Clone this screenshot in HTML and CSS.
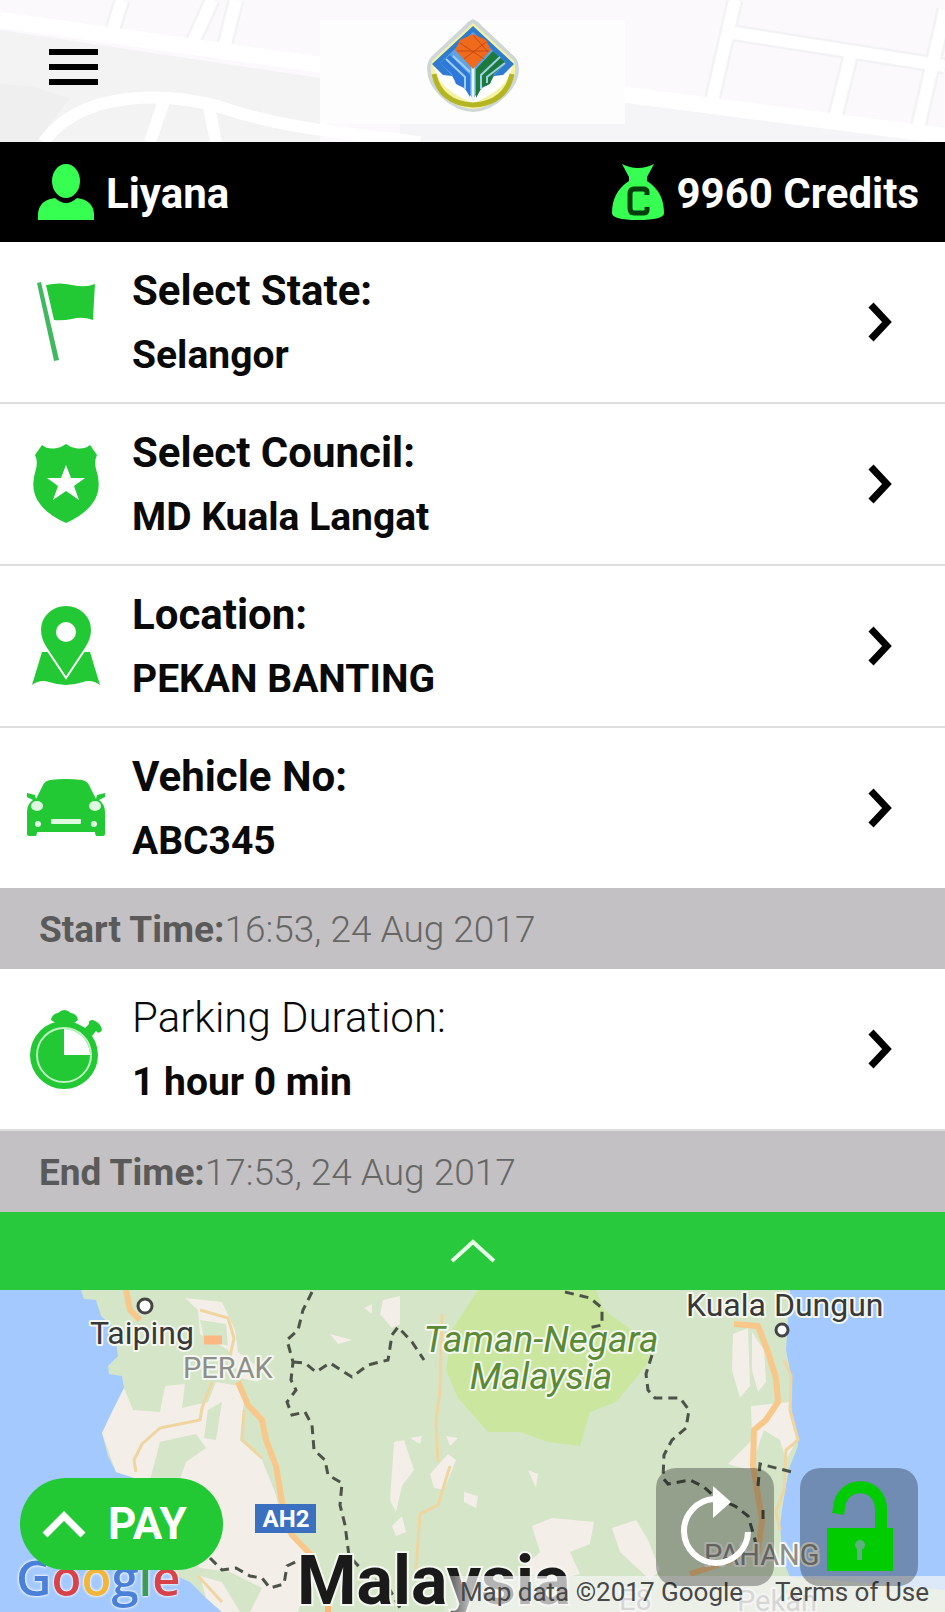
FILE: index.html
```html
<!DOCTYPE html>
<html lang="en">
<head>
  <meta charset="UTF-8">
  <meta name="viewport" content="width=device-width, initial-scale=1">
  <title>Parking</title>
  <link rel="stylesheet" href="styles.css">
</head>
<body>

  <header class="topbar">
    <svg class="topbar-bg" viewBox="0 0 945 142" preserveAspectRatio="xMidYMid slice" aria-hidden="true">
      <rect width="945" height="142" fill="#fbf9fc"/>
      <path d="M0 30 L320 78 V142 H0 Z" fill="#f3f3f4"/>
      <path d="M0 84 L30 86 L70 98 L36 142 H0 Z" fill="#efeff0"/>
      <path d="M620 100 L945 142 H400 V120 Z" fill="#f5f5f7"/>
      <g fill="none" stroke="#f3f2f5" stroke-width="17">
        <path d="M122 0 L112 32 M212 0 L193 42 M236 0 L224 48"/>
        <path d="M735 0 L710 110 M728 32 L945 66 M852 50 L835 118 M945 10 L918 128"/>
      </g>
      <g fill="none" stroke="#fff" stroke-width="12">
        <path d="M0 20 L330 66" stroke-width="16"/>
        <path d="M122 0 L112 32 M212 0 L193 42 M236 0 L224 48"/>
        <path d="M44 142 C80 90 170 90 230 110 S360 134 420 142"/>
        <path d="M165 98 L150 142 M208 102 L216 142"/>
        <path d="M735 0 L710 110 M728 32 L945 66 M852 50 L835 118 M945 10 L918 128"/>
        <path d="M620 94 L945 136" stroke-width="16"/>
      </g>
      <rect x="320" y="20" width="305" height="104" fill="#fefdfe"/>
    </svg>

    <button class="menu-btn" type="button" aria-label="Menu">
      <span></span>
      <span></span>
      <span></span>
    </button>

    <svg class="logo" viewBox="0 0 94 94" role="img" aria-label="Council logo">
      <path d="M47 0 Q52 2 56 7 L88 37 Q93 42 93 50 Q93 64 80 77 Q65 92 47 93 Q29 92 14 77 Q1 64 1 50 Q1 42 6 37 L38 7 Q42 2 47 0 Z" fill="#cfd6d8"/>
      <path d="M47 4 L88 42 Q93 60 77 75 Q64 89 47 90 Q30 89 17 75 Q1 60 6 42 Z" fill="#f4f3a4"/>
      <path d="M8 48 L86 48 Q82 70 47 84 Q12 70 8 48 Z" fill="#fff"/>
      <path d="M8 55 Q14 84 47 86 Q80 84 86 55" fill="none" stroke="#b3b522" stroke-width="5"/>
      <path d="M47 7 L88 45 L77 56 L68 57 L62 66 L54 70 L47 80 L40 70 L32 66 L26 57 L17 56 L6 45 Z" fill="#2e7bd0"/>
      <path d="M47 13 L80 44 L47 78 L14 44 Z" fill="#5fa3e6"/>
      <path d="M14 44 L24 36 L44 56 V78 L38 68 L30 65 L26 55 Z" fill="#2f78db"/>
      <path d="M80 44 L67 32 L50 50 V79 L56 68 L64 65 L68 55 Z" fill="#1c7a3d"/>
      <path d="M20 40 L39 58 V70 M27 37 L44 53 M55 70 V56 L74 38 M61 64 V58 L79 44" fill="none" stroke="#9fd0e8" stroke-width="2"/>
      <path d="M47 46 V82" stroke="#e8f4ee" stroke-width="3"/>
      <path d="M47 15 L60 21 L65 31 L47 50 L29 31 L34 21 Z" fill="#ef6a1c"/>
      <path d="M34 24 L58 40 M47 16 L62 33 M60 23 L38 40 M31 32 H63" stroke="#c94a12" stroke-width="1"/>
    </svg>
  </header>

  <section class="account">
    <div class="account-item">
      <svg class="user-icon" viewBox="0 0 56 56" aria-hidden="true">
        <ellipse cx="28" cy="17" rx="14" ry="17"/>
        <path d="M0 56 V50 Q1 36 17 34 Q28 44 39 34 Q55 36 56 50 V56 Z"/>
      </svg>
      <span>Liyana</span>
    </div>
    <div class="account-item credits">
      <svg class="bag-icon" viewBox="0 0 52 56" aria-hidden="true">
        <path d="M10 0 Q18 4 26 4 Q34 4 42 0 L35 13 V17 Q52 28 52 49 Q52 56 26 56 Q0 56 0 49 Q0 28 17 17 V13 Z"/>
        <path class="bag-mark" d="M35 31 V28 Q35 25 31 25 H22 Q18 25 18 30 V44 Q18 49 22 49 H31 Q35 49 35 46 V43"/>
      </svg>
      <span>9960 Credits</span>
    </div>
  </section>

  <main>
    <button class="row" type="button">
      <svg class="row-icon" viewBox="0 0 80 80" aria-hidden="true">
        <path d="M11 1 L15 0 L33 78 L28 79 Z" fill="#3fb860"/>
        <path d="M20 3 Q34 0 46 3 Q60 6 69 2 L68 18 L67 38 Q56 34 46 37 Q36 39 28 38 Z"/>
      </svg>
      <span class="row-text">
        <span class="row-label">Select State:</span>
        <span class="row-value">Selangor</span>
      </span>
      <svg class="chevron" viewBox="0 0 24 40" aria-hidden="true"><path d="M3 3 L19 20 L3 37"/></svg>
    </button>

    <button class="row" type="button">
      <svg class="row-icon" viewBox="0 0 80 80" aria-hidden="true">
        <path d="M16 1 Q22 6 31 4 Q36 3 40 0 Q44 3 49 4 Q58 6 64 1 L71 11 Q68 17 70 25 Q77 46 66 60 Q58 71 40 79 Q22 71 14 60 Q3 46 10 25 Q12 17 9 11 Z"/>
        <path fill="#fff" d="M40 21 L45 34 H59 L48 42 L53 56 L40 47 L27 56 L32 42 L21 34 H35 Z"/>
      </svg>
      <span class="row-text">
        <span class="row-label">Select Council:</span>
        <span class="row-value">MD Kuala Langat</span>
      </span>
      <svg class="chevron" viewBox="0 0 24 40" aria-hidden="true"><path d="M3 3 L19 20 L3 37"/></svg>
    </button>

    <button class="row" type="button">
      <svg class="row-icon" viewBox="0 0 80 80" aria-hidden="true">
        <path d="M16 46 H64 L74 79 Q66 73 57 76 Q48 79 40 79 Q32 79 23 76 Q14 73 6 79 Z"/>
        <path stroke="#fff" stroke-width="2" d="M40 72 L20 42 Q14 33 14 24 A26 25 0 0 1 66 24 Q66 33 60 42 Z"/>
        <circle cx="40" cy="26" r="10" fill="#fff"/>
      </svg>
      <span class="row-text">
        <span class="row-label">Location:</span>
        <span class="row-value">PEKAN BANTING</span>
      </span>
      <svg class="chevron" viewBox="0 0 24 40" aria-hidden="true"><path d="M3 3 L19 20 L3 37"/></svg>
    </button>

    <button class="row" type="button">
      <svg class="row-icon" viewBox="0 0 80 80" aria-hidden="true">
        <path d="M24 12 Q40 10 56 12 Q61 13 63 17 L70 31 L71 27 L79 25 V29 L73 32 Q79 36 79 44 V66 Q79 68 76 68 H71 Q69 68 69 64 H11 Q11 68 9 68 H4 Q1 68 1 66 V44 Q1 36 7 32 L1 29 V25 L9 27 L10 31 L17 17 Q19 13 24 12 Z"/>
        <g fill="#dff8e0">
          <ellipse cx="11" cy="38" rx="6" ry="5"/>
          <ellipse cx="69" cy="38" rx="6" ry="5"/>
          <circle cx="12" cy="56" r="3"/>
          <circle cx="68" cy="56" r="3"/>
          <rect x="25" y="51" width="30" height="5" rx="1"/>
        </g>
      </svg>
      <span class="row-text">
        <span class="row-label">Vehicle No:</span>
        <span class="row-value">ABC345</span>
      </span>
      <svg class="chevron" viewBox="0 0 24 40" aria-hidden="true"><path d="M3 3 L19 20 L3 37"/></svg>
    </button>

    <p class="time-bar"><b>Start Time:</b>16:53, 24 Aug 2017</p>

    <button class="row" type="button">
      <svg class="row-icon" viewBox="0 0 80 80" aria-hidden="true">
        <path d="M25 11 Q26 5 32 4 Q38 -2 45 4 Q51 5 52 11 L47 15 V20 H31 V15 Z"/>
        <path d="M58 20 L63 15 Q62 11 67 11 Q75 14 76 21 Q73 26 70 22 L66 27 Z"/>
        <circle cx="38" cy="46" r="34"/>
        <circle cx="38" cy="46" r="27" fill="none" stroke="#bff3c2" stroke-width="2"/>
        <path fill="#fff" d="M38 46 V20 A26 26 0 0 1 64 46 Z"/>
      </svg>
      <span class="row-text">
        <span class="row-label light">Parking Duration:</span>
        <span class="row-value">1 hour 0 min</span>
      </span>
      <svg class="chevron" viewBox="0 0 24 40" aria-hidden="true"><path d="M3 3 L19 20 L3 37"/></svg>
    </button>

    <p class="time-bar"><b>End Time:</b>17:53, 24 Aug 2017</p>

    <button class="collapse" type="button" aria-label="Collapse">
      <svg viewBox="0 0 46 24" aria-hidden="true"><path d="M2 22 L23 3 L44 22"/></svg>
    </button>
  </main>

  <section class="map">
    <svg class="map-bg" viewBox="0 0 945 322" preserveAspectRatio="xMidYMid slice">
      <rect width="945" height="322" fill="#a3c9ff"/>
      <!-- land -->
      <path fill="#d5e5c8" d="M81 0 L84 9 L96 10 L101 26 L114 38 L118 66 L108 76 L109 84 L122 86 L124 98 L112 122 L102 143 L108 166 L116 182 L134 187 L150 250 L172 284 L190 292 L206 308 L222 322 H945 V300 L790 287 L783 270 L780 235 L782 220 L786 195 L790 176 L798 156 L797 145 L791 130 L792 90 L786 60 L790 0 Z"/>
      <!-- lowlands -->
      <g fill="#f3eee8">
        <path d="M185 8 L222 12 L235 40 L238 62 L262 80 L258 92 L240 88 L228 60 L200 44 L198 20 Z"/>
        <path d="M124 98 L133 120 L160 122 L165 96 L185 94 L182 118 L208 112 L216 92 L240 96 L244 110 L240 150 L262 170 L276 205 L284 240 L312 270 L298 322 L250 322 L262 298 L230 282 L200 278 L160 240 L140 190 L116 182 L102 143 L112 122 Z"/>
        <path d="M383 10 L400 6 L400 34 L392 38 L380 24 Z"/>
        <path d="M394 152 L404 150 L414 180 L402 196 L396 222 L390 210 Z"/>
        <path d="M430 184 L448 164 L456 170 L444 200 L434 198 Z"/>
        <path d="M733 44 L748 38 L750 96 L740 108 L732 80 Z"/>
        <path d="M752 42 L764 60 L766 92 L758 102 L752 80 Z"/>
        <path d="M751 116 L790 112 L797 150 L786 170 L780 150 L764 140 L750 180 L728 174 L752 150 Z"/>
        <path d="M532 236 L552 228 L594 232 L590 254 L570 262 L580 284 L548 292 L520 280 L540 262 Z"/>
        <path d="M612 238 L636 230 L648 250 L660 280 L650 290 L620 262 Z"/>
        <path d="M464 202 L478 206 L476 218 L464 212 Z M528 180 L538 184 L536 198 Z"/>
        <path d="M392 236 L402 226 L406 242 L396 246 Z M446 146 L458 148 L450 156 Z"/>
        <path d="M364 18 L372 14 L372 24 Z M330 44 L352 50 L338 54 Z M410 148 L422 146 L420 154 Z"/>
        <path d="M200 286 L222 292 L240 322 H222 L206 308 Z"/>
      </g>
      <g fill="#d5e5c8">
        <path d="M160 152 L196 144 L206 158 L186 172 L176 200 L150 190 Z"/>
        <path d="M208 120 L222 112 L216 150 L204 148 Z M246 132 L258 130 L256 164 L248 156 Z"/>
        <path d="M200 30 L226 34 L228 56 L204 48 Z"/>
      </g>
      <!-- national park -->
      <path fill="#cbe79f" d="M478 0 L596 0 L604 20 L640 46 L650 70 L636 88 L616 112 L590 122 L580 156 L548 152 L520 142 L488 142 L474 126 L458 108 L446 80 L452 40 Z"/>
      <!-- roads -->
      <g fill="none" stroke="#f7c88a" stroke-width="6" stroke-linejoin="round">
        <path d="M126 0 L130 20 L140 30"/>
        <path d="M204 50 H222" stroke-width="9" stroke="#fbb884"/>
        <path d="M238 92 L248 115 L262 130 L266 150 L276 176 L282 212 L292 245 L312 266"/>
        <path d="M734 34 L758 36 L768 62 L776 88 L778 112 L766 130 L754 140 L753 175 L762 230 L758 262 L690 284"/>
      </g>
      <g fill="none" stroke="#efd6a0" stroke-width="3" stroke-linejoin="round">
        <path d="M200 20 L228 28 L234 48 L230 66"/>
        <path d="M212 92 L202 118 L200 130 L160 138 L142 154 L134 170 L136 182"/>
        <path d="M244 120 L242 150 L262 168"/>
        <path d="M442 24 L440 100 L436 130 L438 172 M450 176 L438 215 L420 224 L416 280"/>
        <path d="M784 70 L791 86 L790 120 L798 150 L786 160 L784 200 L776 222 L780 240"/>
        <path d="M198 286 L222 312"/>
        <path d="M328 300 V322" stroke="#f9b878" stroke-width="6"/>
      </g>
      <!-- state borders -->
      <g fill="none" stroke="#4c5348" stroke-width="3" stroke-dasharray="9 6">
        <path d="M312 2 L303 20 L298 40 L287 50 L293 72 L291 90 L296 100 L287 112 L292 125 L305 122 L312 135 L314 160 L325 170 L328 185 L342 193 L340 215 L345 235 L349 266 L366 284 L390 300 L400 318"/>
        <path d="M293 72 L305 73 L316 82 L330 73 L352 87 L368 75 L388 70 L392 45 L398 37 L412 52 L424 70"/>
        <path d="M565 2 L590 8 L602 18 L602 35 L588 38"/>
        <path d="M652 65 L646 84 L648 100 L655 108 L680 108 L689 120 L686 138 L672 150 L664 165 L663 188 L668 194 L690 190 L704 197 L716 208 L735 216 L748 226 L754 246 L757 258"/>
        <path d="M758 196 L760 174 L792 182 M763 220 V230"/>
        <path d="M210 268 L222 280 L236 278 L250 286 L262 288 L270 298 L284 294 L287 276 L300 270"/>
      </g>
      <circle class="town" cx="145" cy="16" r="7"/>
      <circle class="town" cx="782" cy="40" r="6"/>
      <text class="place" x="90" y="54">Taiping</text>
      <text class="place" x="686" y="26">Kuala Dungun</text>
      <text class="place state" x="183" y="88">PERAK</text>
      <text class="place state" x="704" y="275">PAHANG</text>
      <text class="place park" x="541" y="62">Taman-Negara</text>
      <text class="place park" x="541" y="99">Malaysia</text>
      <text class="place faint" x="619" y="320">E8</text>
      <text class="place faint" x="737" y="321">Pekan</text>
      <rect x="255" y="214" width="61" height="29" fill="#3b6fc0"/>
      <text class="route" x="286" y="237">AH2</text>
      <text class="country" x="297" y="314">Malaysia</text>
    </svg>

    <div class="google" aria-label="Google"><span class="b">G</span><span class="r">o</span><span class="y">o</span><span class="b">g</span><span class="g">l</span><span class="r">e</span></div>

    <div class="attribution">
      <span>Map data ©2017 Google</span>
      <a href="#">Terms of Use</a>
    </div>

    <button class="pay-btn" type="button">
      <svg viewBox="0 0 44 28" aria-hidden="true"><path d="M3 25 L22 6 L41 25"/></svg>
      PAY
    </button>

    <div class="map-tools">
      <button class="tool-btn" type="button" aria-label="Refresh">
        <svg viewBox="0 0 118 118" aria-hidden="true">
          <path d="M92 64 A32 32 0 1 1 58 31" fill="none" stroke="#fff" stroke-width="6"/>
          <path d="M57 18 L75 34 L57 50 Z" fill="#fff"/>
        </svg>
      </button>
      <button class="tool-btn" type="button" aria-label="Unlock">
        <svg viewBox="0 0 118 118" aria-hidden="true">
          <path d="M38 46 L39 40 C41 12 81 12 81 42 V60" fill="none" stroke="#0c0" stroke-width="12"/>
          <rect x="27" y="60" width="66" height="43" fill="#0c0"/>
          <circle cx="60" cy="77" r="5" fill="#5fb080"/>
          <rect x="57" y="79" width="5" height="13" fill="#5fb080"/>
        </svg>
      </button>
    </div>
  </section>

</body>
</html>
```

FILE: styles.css
```css
* {
  box-sizing: border-box;
}

body {
  margin: 0;
  min-height: 100vh;
  display: flex;
  flex-direction: column;
  background-color: #fff;
  color: #0a0a0a;
  font-family: Roboto, "Liberation Sans", sans-serif;
}

button {
  margin: 0;
  border: 0;
  font-family: inherit;
  color: inherit;
  cursor: pointer;
}

/* top bar */
.topbar {
  position: relative;
  height: 142px;
  display: flex;
  align-items: center;
  justify-content: center;
  overflow: hidden;
}

.topbar-bg {
  position: absolute;
  top: 0;
  left: 0;
  width: 100%;
  height: 100%;
}

.menu-btn {
  position: absolute;
  left: 49px;
  display: flex;
  flex-direction: column;
  gap: 9px;
  width: 49px;
  padding: 0 0 8px;
  background: none;
}

.menu-btn span {
  height: 6px;
  background-color: #000;
}

.logo {
  position: relative;
  width: 94px;
  height: 94px;
  margin-bottom: 10px;
}

/* user + credits */
.account {
  display: flex;
  align-items: center;
  justify-content: space-between;
  height: 100px;
  padding: 0 26px 0 38px;
  background-color: #000;
  color: #fff;
  font-size: 42px;
  font-weight: 700;
}

.account-item {
  display: flex;
  align-items: center;
  gap: 12px;
}

.account-item span {
  padding-top: 2px;
}

.account svg {
  height: 56px;
  fill: #36ff52;
}

.user-icon {
  width: 56px;
}

.bag-icon {
  width: 52px;
}

.account .bag-mark {
  fill: none;
  stroke: #043d0c;
  stroke-width: 5;
}

/* selection rows */
.row {
  display: flex;
  align-items: center;
  gap: 26px;
  width: 100%;
  height: 162px;
  padding: 0 53px 0 26px;
  border-bottom: 2px solid #dedede;
  background-color: #fff;
  text-align: left;
}

.row:nth-of-type(4) {
  height: 160px;
  border-bottom: 0;
}

.row-icon {
  width: 80px;
  height: 80px;
  fill: #22c935;
}

.row-text {
  flex: 1;
  display: flex;
  flex-direction: column;
  padding-top: 2px;
  line-height: 65px;
}

.row-label {
  font-size: 42px;
  font-weight: 700;
}

.row-label.light {
  font-weight: 300;
}

.row-value {
  font-size: 39px;
  font-weight: 700;
}

.chevron {
  width: 24px;
  height: 40px;
  fill: none;
  stroke: #000;
  stroke-width: 7;
}

.time-bar {
  margin: 0;
  padding: 2px 39px 0;
  background-color: #c3c1c3;
  color: #666;
  font-size: 37px;
  font-weight: 300;
  line-height: 79px;
}

.time-bar b {
  color: #5a5a5a;
  font-weight: 700;
}

.collapse {
  display: flex;
  align-items: center;
  justify-content: center;
  width: 100%;
  height: 78px;
  background-color: #28c93c;
}

.collapse svg {
  width: 46px;
  height: 24px;
  fill: none;
  stroke: #e8ffe8;
  stroke-width: 4;
}

/* map */
.map {
  position: relative;
  flex: 1;
  min-height: 322px;
  overflow: hidden;
}

.map-bg {
  position: absolute;
  top: 0;
  left: 0;
  width: 100%;
  height: 100%;
}

.town {
  fill: #fff;
  stroke: #444;
  stroke-width: 3;
}

.place {
  fill: #383838;
  stroke: #f4f7f0;
  stroke-width: 4px;
  stroke-linejoin: round;
  paint-order: stroke;
  font-size: 32px;
}

.state {
  fill: #8e8e8a;
  font-size: 29px;
}

.park {
  fill: #5b8a35;
  font-size: 37px;
  font-style: italic;
  text-anchor: middle;
}

.faint {
  fill: #8e8e8a;
  font-size: 29px;
}

.route {
  fill: #fff;
  font-size: 24px;
  font-weight: 700;
  text-anchor: middle;
}

.country {
  fill: #1a1a1a;
  stroke: #f4f7f0;
  stroke-width: 4px;
  paint-order: stroke;
  font-size: 68px;
  font-weight: 700;
}

.google {
  position: absolute;
  left: 16px;
  bottom: 5px;
  font-family: "Open Sans", sans-serif;
  font-size: 49px;
  font-weight: 600;
  line-height: 60px;
  text-shadow: 0 0 3px #fff, 0 0 3px #fff;
}

.google .b { color: #4a80d8; }
.google .r { color: #d8434a; }
.google .y { color: #f0b53a; }
.google .g { color: #3d9a57; }

.attribution {
  position: absolute;
  right: 0;
  bottom: 0;
  display: flex;
  gap: 32px;
  padding: 0 16px 4px;
  background: linear-gradient(to right, rgba(245, 245, 245, 0.2), rgba(245, 245, 245, 0.7) 24px);
  color: #484848;
  font-size: 26px;
  line-height: 32px;
}

.attribution a {
  color: inherit;
  text-decoration: none;
}

.pay-btn {
  position: absolute;
  left: 20px;
  bottom: 42px;
  display: flex;
  align-items: center;
  gap: 22px;
  height: 92px;
  padding: 0 36px 0 22px;
  border-radius: 46px;
  background-color: #22c935;
  color: #fff;
  font-size: 44px;
  font-weight: 700;
}

.pay-btn svg {
  width: 44px;
  height: 28px;
  fill: none;
  stroke: #fff;
  stroke-width: 7;
}

.map-tools {
  position: absolute;
  right: 27px;
  bottom: 26px;
  display: flex;
  gap: 26px;
}

.tool-btn {
  width: 118px;
  height: 118px;
  padding: 0;
  border-radius: 20px;
  background-color: rgba(0, 0, 0, 0.3);
}

.tool-btn svg {
  display: block;
  width: 100%;
  height: 100%;
}
```
